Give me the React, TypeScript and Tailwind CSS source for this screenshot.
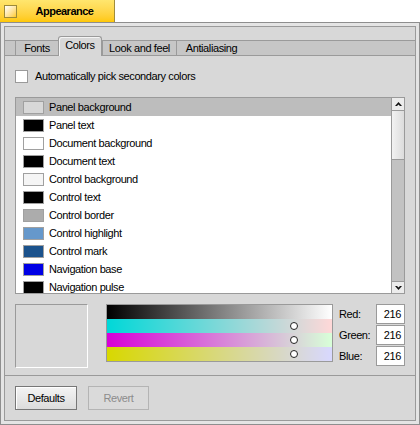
import React from "react";

type ColorItem = { name: string; swatch: string };

const items: ColorItem[] = [
  { name: "Panel background", swatch: "bg-[#d8d8d8]" },
  { name: "Panel text", swatch: "bg-black" },
  { name: "Document background", swatch: "bg-white" },
  { name: "Document text", swatch: "bg-black" },
  { name: "Control background", swatch: "bg-[#f5f5f5]" },
  { name: "Control text", swatch: "bg-black" },
  { name: "Control border", swatch: "bg-[#acacac]" },
  { name: "Control highlight", swatch: "bg-[#6698cb]" },
  { name: "Control mark", swatch: "bg-[#1b528c]" },
  { name: "Navigation base", swatch: "bg-[#0000e5]" },
  { name: "Navigation pulse", swatch: "bg-black" },
];

const channels = [
  { label: "Red:", value: "216" },
  { label: "Green:", value: "216" },
  { label: "Blue:", value: "216" },
];

function Tab({ label, width }: { label: string; width: string }) {
  return (
    <div
      className={`${width} h-[16px] bg-[#c6c6c6] border-y border-l border-[#9a9a9a] flex items-center justify-center`}
    >
      {label}
    </div>
  );
}

function Arrow({ down }: { down?: boolean }) {
  return (
    <svg width="7" height="5" viewBox="0 0 7 5" className={down ? "rotate-180" : ""}>
      <path d="M3.5 0 L7 4 L5 4 L3.5 2.5 L2 4 L0 4 Z" fill="#111" />
    </svg>
  );
}

export default function App() {
  return (
    <div className="w-[420px] h-[425px] bg-white font-['Liberation_Sans',Arial,sans-serif] text-[11px] tracking-[-0.4px] text-black leading-none select-none">
      {/* title tab */}
      <div className="w-[115px] h-[22px] bg-linear-to-b from-[#ffe66e] to-[#ffc800] border-r border-[#a08c3c] flex items-center">
        <div className="ml-[4px] w-[13px] h-[13px] border border-[#9c8a3a] bg-linear-to-br from-white to-[#ffcb00]" />
        <span className="flex-1 text-center font-bold text-[11px] tracking-[-0.5px] pr-[2px]">Appearance</span>
      </div>

      {/* window frame */}
      <div className="h-[403px] border border-[#8e8e8e] bg-[#e4e4e4] p-[3px]">
        <div className="h-full border border-[#9a9a9a] bg-[#d8d8d8] flex flex-col">
          {/* tabs */}
          <div className="h-[29px] flex items-end">
            <div className="w-[10px] h-[16px] bg-[#c6c6c6] border-y border-[#9a9a9a]" />
            <Tab label="Fonts" width="w-[43px]" />
            <div className="w-[44px] h-[20px] bg-[#d8d8d8] border-t border-x border-[#9a9a9a] rounded-t-[3px] shadow-[inset_1px_1px_0_#f4f4f4] flex items-center justify-center pb-[2px]">
              Colors
            </div>
            <Tab label="Look and feel" width="w-[74px]" />
            <Tab label="Antialiasing" width="w-[70px]" />
            <div className="flex-1 h-[16px] bg-[#c6c6c6] border-y border-[#9a9a9a]" />
          </div>

          {/* tab content */}
          <div className="h-[320px] border-b border-[#9a9a9a] px-[10px] pt-[14px] flex flex-col">
            <div className="flex items-center gap-[7px] h-[13px]">
              <div className="w-[13px] h-[13px] bg-white border border-[#9a9a9a]" />
              <span>Automatically pick secondary colors</span>
            </div>

            {/* colour list */}
            <div className="mt-[14px] h-[197px] border border-[#9a9a9a] bg-white flex overflow-hidden">
              <div className="flex-1 overflow-hidden">
                {items.map((item, i) => (
                  <div
                    key={item.name}
                    className={`h-[18px] flex items-center pl-[7px] ${i === 0 ? "bg-[#bdbdbd]" : ""}`}
                  >
                    <div className={`w-[21px] h-[13px] border border-[#a0a0a0] ${item.swatch}`} />
                    <span className="ml-[5px]">{item.name}</span>
                  </div>
                ))}
              </div>
              {/* scrollbar */}
              <div className="w-[13px] border-l border-[#9a9a9a] bg-[#c2c2c2] flex flex-col">
                <div className="h-[13px] bg-[#ececec] border-b border-[#9a9a9a] flex items-center justify-center">
                  <Arrow />
                </div>
                <div className="h-[49px] bg-linear-to-r from-[#f2f2f2] to-[#dcdcdc] border-b border-[#9a9a9a]" />
                <div className="flex-1" />
                <div className="h-[12px] bg-[#ececec] border-t border-[#9a9a9a] flex items-center justify-center">
                  <Arrow down />
                </div>
              </div>
            </div>

            {/* colour control */}
            <div className="mt-[10px] flex items-start">
              <div className="w-[73px] h-[64px] bg-[#d8d8d8] border-t border-l border-[#9a9a9a] border-b border-r border-b-white border-r-white" />
              <div className="relative ml-[18px] w-[228px] h-[58px] border border-[#9a9a9a] flex flex-col">
                <div className="h-[14px] bg-linear-to-r/srgb from-black to-white" />
                <div className="h-[14px] bg-linear-to-r/srgb from-[#00d8d8] to-[#ffd8d8]" />
                <div className="h-[14px] bg-linear-to-r/srgb from-[#d800d8] to-[#d8ffd8]" />
                <div className="h-[14px] bg-linear-to-r/srgb from-[#d8d800] to-[#d8d8ff]" />
                <div className="absolute left-[183px] top-[17px] w-[8px] h-[8px] rounded-full bg-white border-[1.5px] border-[#222]" />
                <div className="absolute left-[183px] top-[31px] w-[8px] h-[8px] rounded-full bg-white border-[1.5px] border-[#222]" />
                <div className="absolute left-[183px] top-[45px] w-[8px] h-[8px] rounded-full bg-white border-[1.5px] border-[#222]" />
              </div>
              <div className="ml-[6px] flex flex-col gap-[1px]">
                {channels.map((c) => (
                  <div key={c.label} className="flex items-center h-[20px]">
                    <span className="w-[37px]">{c.label}</span>
                    <div className="w-[29px] h-[20px] bg-white border border-[#9a9a9a] flex items-center justify-end pr-[3px]">
                      {c.value}
                    </div>
                  </div>
                ))}
              </div>
            </div>
          </div>

          {/* buttons */}
          <div className="flex-1 pl-[10px] pt-[10px] flex items-start gap-[11px]">
            <button className="w-[62px] h-[24px] border border-[#777] bg-linear-to-b from-[#f4f4f4] to-[#dcdcdc] shadow-[inset_1px_1px_0_#fff] flex items-center justify-center">
              Defaults
            </button>
            <button className="w-[61px] h-[24px] border border-[#b4b4b4] bg-[#dadada] text-[#8c8c8c] flex items-center justify-center">
              Revert
            </button>
          </div>
        </div>
      </div>
    </div>
  );
}
